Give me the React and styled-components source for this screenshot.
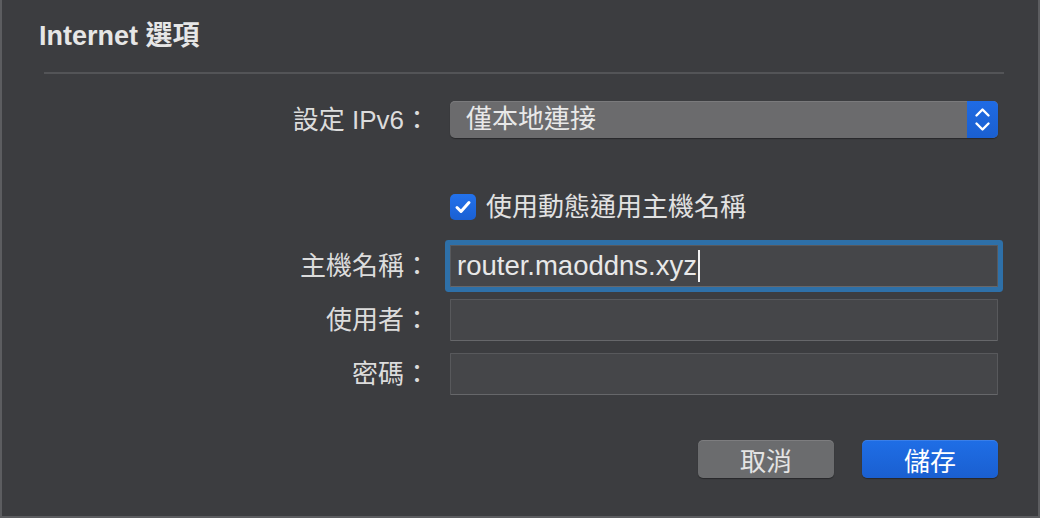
import React from 'react';
import styled, { createGlobalStyle } from 'styled-components';

const GlobalStyle = createGlobalStyle`
  body {
    margin: 0;
    background: #3c3d40;
    font-family: "Liberation Sans", "Noto Sans CJK TC", sans-serif;
  }
`;

const Dialog = styled.div`
  width: 1040px;
  height: 518px;
  box-sizing: border-box;
  padding: 21px 34px 0 37px;
  background: #3c3d40;
  border-left: 2px solid #5c5d60;
  border-right: 2px solid #5c5d60;
  border-bottom: 2px solid #5c5d60;
  color: #dedede;
`;

const Title = styled.h1`
  margin: 0;
  font-size: 27px;
  line-height: 31px;
  font-weight: 700;
  color: #e6e6e6;
`;

const Divider = styled.hr`
  margin: 20px 0 0 5px;
  border: 0;
  height: 2px;
  background: #535457;
`;

const Form = styled.div`
  display: flex;
  flex-direction: column;
  margin-left: 5px;
`;

const Row = styled.div`
  display: grid;
  grid-template-columns: 386px 548px;
  column-gap: 20px;
  align-items: center;
  margin-top: ${(p) => p.$top}px;
`;

const Label = styled.label`
  text-align: right;
  font-size: 26px;
  line-height: 30px;
  color: #dcdcdc;
`;

const Select = styled.div`
  display: flex;
  height: 37px;
  border-radius: 5px;
  overflow: hidden;
  background: #6b6b6d;
  box-shadow: inset 0 1px 0 #7a7a7c, 0 1px 1px rgba(0, 0, 0, 0.35);
`;

const SelectText = styled.span`
  flex: 1;
  padding-left: 16px;
  font-size: 26px;
  line-height: 37px;
  color: #e8e8e8;
`;

const Stepper = styled.span`
  width: 31px;
  display: flex;
  align-items: center;
  justify-content: center;
  background: linear-gradient(#1f6be4, #1a5fd0);
`;

const Check = styled.span`
  display: flex;
  align-items: center;
  gap: 10px;
  font-size: 26px;
  line-height: 30px;
  color: #e2e2e2;
`;

const Box = styled.span`
  width: 26px;
  height: 26px;
  border-radius: 5px;
  display: flex;
  align-items: center;
  justify-content: center;
  background: linear-gradient(#2372ec, #1a60d3);
`;

const Field = styled.div`
  height: 42px;
  box-sizing: border-box;
  padding-left: 6px;
  display: flex;
  align-items: center;
  background: #454649;
  border: 1px solid #58595c;
  border-bottom-color: #66676a;
  border-radius: 1px;
  font-size: 27.5px;
  color: #e8e8e8;
  box-shadow: ${(p) => (p.$focused ? '0 0 0 5px #2e70a8' : 'none')};
`;

const Caret = styled.span`
  width: 2px;
  height: 32px;
  margin-left: 1px;
  background: #f2f2f2;
`;

const Actions = styled.div`
  display: flex;
  justify-content: flex-end;
  gap: 28px;
  width: 954px;
  margin-top: 45px;
`;

const Button = styled.button`
  width: 136px;
  height: 38px;
  border: 0;
  border-radius: 5px;
  font-family: inherit;
  font-size: 26px;
  color: ${(p) => (p.$primary ? '#ffffff' : '#e4e4e4')};
  background: ${(p) =>
    p.$primary ? 'linear-gradient(#1f6ee6, #1a5fd0)' : '#6b6c6e'};
  box-shadow: inset 0 1px 0 rgba(255, 255, 255, 0.12), 0 1px 1px rgba(0, 0, 0, 0.35);
`;

export default function App() {
  return (
    <>
      <GlobalStyle />
      <Dialog>
        <Title>Internet 選項</Title>
        <Divider />
        <Form>
          <Row $top={27}>
            <Label>設定 IPv6：</Label>
            <Select>
              <SelectText>僅本地連接</SelectText>
              <Stepper>
                <svg width="31" height="37" viewBox="0 0 31 37" fill="none" stroke="#fff" strokeWidth="2.4" strokeLinecap="round" strokeLinejoin="round">
                  <path d="M9.5 14.5 L15.5 8.5 L21.5 14.5" />
                  <path d="M9.5 22.5 L15.5 28.5 L21.5 22.5" />
                </svg>
              </Stepper>
            </Select>
          </Row>
          <Row $top={54}>
            <span />
            <Check>
              <Box>
                <svg width="26" height="26" viewBox="0 0 26 26" fill="none" stroke="#fff" strokeWidth="3" strokeLinecap="round" strokeLinejoin="round">
                  <path d="M7 13.5 L11 17.5 L19 8.5" />
                </svg>
              </Box>
              使用動態通用主機名稱
            </Check>
          </Row>
          <Row $top={23}>
            <Label>主機名稱：</Label>
            <Field $focused>
              router.maoddns.xyz
              <Caret />
            </Field>
          </Row>
          <Row $top={12}>
            <Label>使用者：</Label>
            <Field />
          </Row>
          <Row $top={12}>
            <Label>密碼：</Label>
            <Field />
          </Row>
          <Actions>
            <Button>取消</Button>
            <Button $primary>儲存</Button>
          </Actions>
        </Form>
      </Dialog>
    </>
  );
}
